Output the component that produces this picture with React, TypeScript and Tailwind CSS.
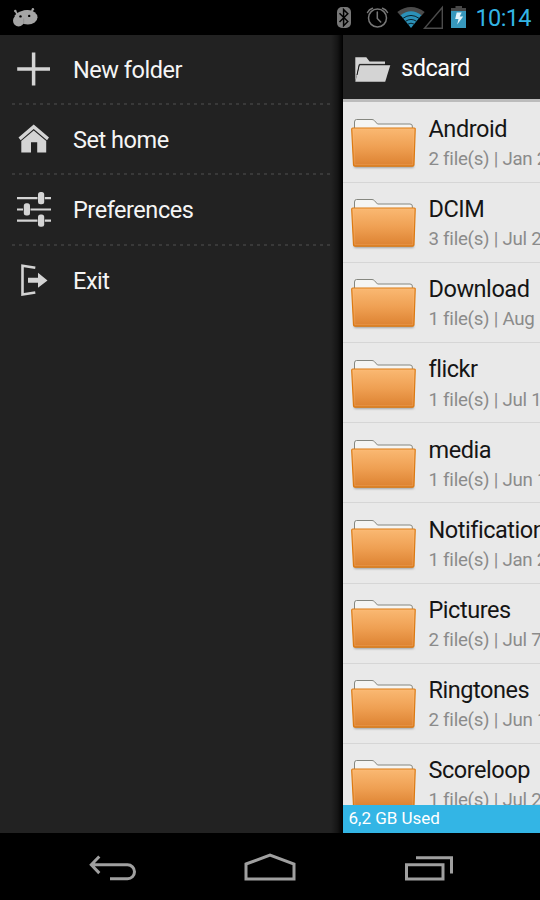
import type { ReactNode } from "react";

const files = [
  ["Android", "2 file(s) | Jan 2"],
  ["DCIM", "3 file(s) | Jul 2"],
  ["Download", "1 file(s) | Aug"],
  ["flickr", "1 file(s) | Jul 1"],
  ["media", "1 file(s) | Jun 1"],
  ["Notifications", "1 file(s) | Jan 2"],
  ["Pictures", "2 file(s) | Jul 7"],
  ["Ringtones", "2 file(s) | Jun 1"],
  ["Scoreloop", "1 file(s) | Jul 2"],
];

function StatusBar() {
  return (
    <header className="flex h-[35px] shrink-0 items-center bg-black">
      <svg width="540" height="35" viewBox="0 0 540 35" fill="none">
        <g fill="#a5a5a5">
          <ellipse cx="27.800" cy="17.300" rx="9.700" ry="7.300" />
          <circle cx="18.600" cy="20.800" r="5.600" />
          <path d="M14.800 21V15.500Q18 10.500 28 10V20z" />
          <path d="M15.300 11l2.200 3.500M32.800 9.500l-1.800 3" stroke="#a5a5a5" strokeWidth="1.500" />
          <circle cx="15.300" cy="11" r="1.200" />
          <circle cx="32.900" cy="9.300" r="1.200" />
          <circle cx="20.500" cy="16.400" r="1.200" fill="#000" />
          <circle cx="29.200" cy="15.900" r="1.200" fill="#000" />
          <path d="M23.700 18.500V24" stroke="#8d8d8d" strokeWidth=".8" />
        </g>
        <rect x="337" y="7" width="14" height="21" rx="5" fill="#777" />
        <path d="M339.500 13.200l8.300 8.300-4.200 4.200V9.600l4.200 4.200-8.300 8.200" stroke="#000" strokeWidth="1.500" />
        <g stroke="#777" strokeWidth="1.500" strokeLinecap="round">
          <circle cx="377.500" cy="18" r="9" />
          <path d="M377.300 12v6.500l3.400 3.500M367.500 12.500q1.500-3 5-4.300M387.500 12.500q-1.500-3-5-4.300" />
        </g>
        <path d="M397.300 12Q411 2.200 424.700 12L421 16.200Q411 8.500 401 16.200z" fill="#4b4b4b" />
        <path d="M400.600 15.200Q411 7.500 421.400 15.200L411 28z" fill="#2b91b8" />
        <path d="M402.800 18.400Q411 12.500 419.200 18.400M405.300 21.400Q411 17.500 416.700 21.400M407.700 24.200Q411 22.200 414.300 24.200" stroke="#09222c" strokeWidth="1" />
        <path d="M442.300 7.500V28.200H424.500z" stroke="#4b4b4b" strokeWidth="1.400" />
        <path d="M455.500 6h6.500v2h4v4h-15V8h4.500z" fill="#484848" />
        <path d="M451 11h15v17h-15z" fill="#3798bd" />
        <path d="M456.700 12.500h5l-2 4h3.500l-6 8 1.300-5.600h-3.300z" fill="#e3f4fb" />
        <text x="475.500" y="26" fontSize="23.500" textLength="56" fill="#33b5e5" fontFamily="Roboto">10:14</text>
      </svg>
    </header>
  );
}

const menu: { label: string; icon: ReactNode }[] = [
  { label: "New folder", icon: <path d="M17.200 34H50M33.600 17.500V50.500" stroke="#d4d4d4" strokeWidth="3.500" /> },
  {
    label: "Set home",
    icon: (
      <g fill="#d4d4d4">
        <path d="M18.500 32.500L33.700 19.500 49 32.500 47 35.200 33.700 24 20.700 35.200z" />
        <path d="M21.300 36L33.700 25.600 46.200 36V47.500h-9V37.300h-6.200v10.200h-9.700z" />
      </g>
    ),
  },
  {
    label: "Preferences",
    icon: (
      <>
        <path d="M17 22.200H37.500M44.800 22.200H51M17 33.500h6M30.500 33.500H51M17 44.700h20.500M44.800 44.700H51" stroke="#d4d4d4" strokeWidth="2.200" />
        <g fill="#d4d4d4">
          <rect x="38" y="16" width="6.200" height="12.300" rx="2.500" />
          <rect x="23.800" y="27.300" width="6.200" height="12.300" rx="2.500" />
          <rect x="38" y="38.500" width="6.200" height="12.300" rx="2.500" />
        </g>
      </>
    ),
  },
  {
    label: "Exit",
    icon: (
      <>
        <path d="M35.300 21.700L22.500 19.800V48.500L35.300 46.500" stroke="#d4d4d4" strokeWidth="2.600" />
        <path d="M28 31.700h10v-5L47.500 34.500 38 41.700v-5H28z" fill="#d4d4d4" />
      </>
    ),
  },
];

function Drawer() {
  return (
    <aside className="flex w-[343px] shrink-0 bg-[#222222]">
      <nav className="min-w-0 flex-1">
        {menu.map((m, i) => (
          <div key={m.label} className="flex h-[70.3px] flex-col">
            <div className="flex h-[68px] items-center">
              <svg className="w-[73px] shrink-0" height="68" viewBox="0 0 73 68" fill="none">{m.icon}</svg>
              <span className="pt-[3px] text-[23.5px] tracking-[-0.46px] whitespace-nowrap text-[#f5f5f5]">{m.label}</span>
            </div>
            {i < 3 && <div className="ml-3 h-[2px] w-[319px] bg-[repeating-linear-gradient(90deg,#393939_0px,#393939_3px,transparent_3px,transparent_7px)]" />}
          </div>
        ))}
      </nav>
      <div className="-ml-3 w-3 shrink-0 bg-linear-to-r from-transparent via-black/35 to-black" />
    </aside>
  );
}

function Folder() {
  return (
    <svg className="shrink-0" width="68" height="56" viewBox="0 0 68 56" fill="none">
      <defs>
        <linearGradient id="orange" x1="0" y1="0" x2="0" y2="1">
          <stop stopColor="#fab973" />
          <stop offset=".5" stopColor="#efa053" />
          <stop offset="1" stopColor="#dc8130" />
        </linearGradient>
        <filter id="soft" x="-10%" y="-100%" width="120%" height="300%"><feGaussianBlur stdDeviation="1.300" /></filter>
      </defs>
      <rect x="4" y="48" width="60" height="2.800" rx="1.400" fill="#999" filter="url(#soft)" />
      <path d="M4.500 14V5q0-2.500 2-2.500h15.500q1.500 0 2.300 1L27.500 7H60q2.300 0 2.300 2v5z" fill="#f5f5f3" stroke="#858780" />
      <path d="M2.700 11H64.300q1 0 .9 1.200L64 47.700q0 1.500-1.500 1.500H5q-1.500 0-1.500-1.500L1.700 12.200q0-1.200 1-1.200z" fill="url(#orange)" stroke="#dc7a12" strokeWidth="1.200" />
      <path d="M3.200 12.200H63.800L62.600 47.700H4.900z" stroke="#ffc17e" strokeOpacity=".25" />
    </svg>
  );
}

function Browser() {
  return (
    <main className="flex min-w-0 flex-1 flex-col bg-[#e9e9e9]">
      <div className="flex h-[64px] shrink-0 items-center bg-[#222222]">
        <svg className="shrink-0" width="58" height="64" viewBox="0 0 58 64">
          <path d="M12.300 22.300h11l3.300 4.200H42v3.500H16L12.300 46.800z" fill="#d4d4d4" />
          <path d="M12.300 46.800L16.500 30.200H47.300L42.200 46.800z" fill="#d4d4d4" />
          <path d="M14 40L16.300 29.400H47.600" fill="none" stroke="#151515" strokeWidth="1" />
        </svg>
        <span className="pt-[4px] text-[23.5px] tracking-[-0.46px] text-white">sdcard</span>
      </div>
      <div className="h-[3px] shrink-0 bg-[#bcbcbc]" />
      <div className="min-h-0 flex-1 overflow-hidden pt-[0.7px]">
        {files.map(([name, detail]) => (
          <div key={name} className="flex h-[80.15px] items-start border-b border-[#d6d6d6] pt-[14.5px] pl-[7px]">
            <Folder />
            <div className="ml-[10.500px] shrink-0 whitespace-nowrap">
              <div className="-mt-[2.2px] text-[23.5px] leading-[28px] tracking-[-0.46px] text-[#151515]">{name}</div>
              <div className="mt-[5.2px] text-[18.7px] leading-[22px] tracking-[-0.26px] text-[#8b8b8b]">{detail}</div>
            </div>
          </div>
        ))}
      </div>
      <div className="flex h-[28px] shrink-0 items-center bg-[#33b5e5] pl-[5.500px] text-[17px] text-white">6,2 GB Used</div>
    </main>
  );
}

export default function App() {
  return (
    <div className="flex h-[900px] w-[540px] flex-col overflow-hidden bg-black font-['Roboto',sans-serif]">
      <StatusBar />
      <div className="flex h-[797.500px] shrink-0 overflow-hidden">
        <Drawer />
        <Browser />
      </div>
      <footer className="flex min-h-0 flex-1 items-center justify-center">
        <svg width="540" height="67" viewBox="0 833 540 67" fill="none" stroke="#a0a0a0" strokeWidth="3">
          <path d="M92 864.800h35.500a7 7 0 0 1 0 14H110M99.300 856.500l-8 8.300 8 8.300" />
          <path d="M246 864L270 855.200 294 864V879H246z" />
          <path d="M406.500 864.800h36.500v14.200h-36.500zM416 857.800h35.500V873.500" />
        </svg>
      </footer>
    </div>
  );
}
